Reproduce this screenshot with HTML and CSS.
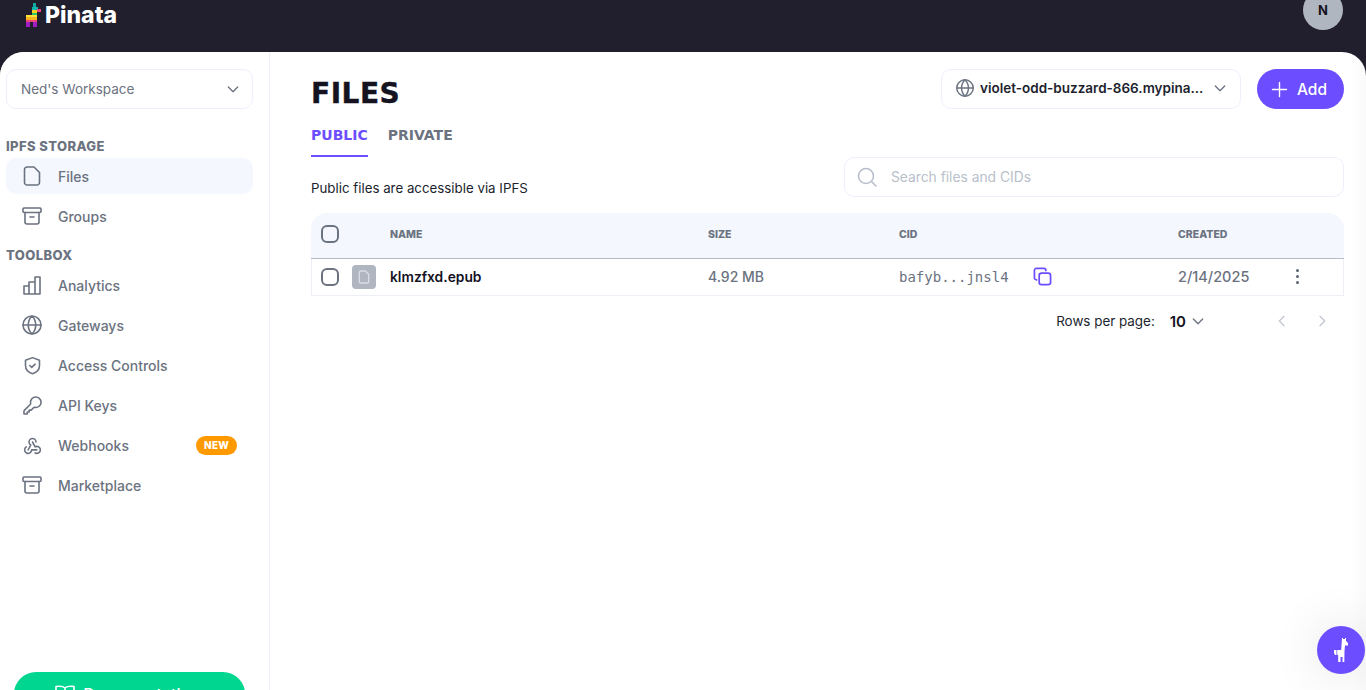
FILE: index.html
```html
<!DOCTYPE html>
<html lang="en">
<head>
    <title>Pinata - Files</title>
    <link rel="stylesheet" href="styles.css">
</head>
<body>

<header class="topbar">
    <a class="logo">
        <svg class="logo-mark" viewBox="0 0 16 24" width="16" height="24">
            <rect x="8" y="0" width="3" height="4" fill="#12a8a0"/>
            <rect x="7" y="4" width="6" height="3" fill="#12b5b0"/>
            <rect x="12" y="6" width="4" height="3" fill="#f0427c"/>
            <rect x="7" y="7" width="5" height="3" fill="#f7d21c"/>
            <rect x="7" y="10" width="5" height="2" fill="#2fc46b"/>
            <rect x="1" y="12" width="11" height="2" fill="#ffe23a"/>
            <rect x="1" y="14" width="11" height="3" fill="#f7b21c"/>
            <rect x="1" y="17" width="11" height="2" fill="#f0427c"/>
            <rect x="1" y="19" width="4" height="5" fill="#a01fc4"/>
            <rect x="8" y="19" width="4" height="5" fill="#a01fc4"/>
        </svg>
        <span>Pinata</span>
    </a>
    <div class="avatar">N</div>
</header>

<div class="app">
    <aside class="sidebar">
        <div class="workspace">
            <span>Ned's Workspace</span>
            <svg class="ico-sm" viewBox="0 0 24 24"><path d="M5 9l7 7 7-7"/></svg>
        </div>

        <h4 class="nav-title">IPFS Storage</h4>
        <a class="nav-item active">
            <svg class="ico" viewBox="0 0 24 24"><path d="M14 3H7a2.500 2.500 0 0 0-2.500 2.500v13A2.500 2.500 0 0 0 7 21h10a2.500 2.500 0 0 0 2.500-2.500V8.500z"/></svg>
            Files
        </a>
        <a class="nav-item">
            <svg class="ico" viewBox="0 0 24 24"><rect x="3" y="4" width="18" height="4.500" rx="1"/><path d="M5 8.500V18a2 2 0 0 0 2 2h10a2 2 0 0 0 2-2V8.500M10 13h4"/></svg>
            Groups
        </a>

        <h4 class="nav-title second">Toolbox</h4>
        <a class="nav-item">
            <svg class="ico" viewBox="0 0 24 24"><path d="M4 13h5v8H4zM9 9h6v12H9zM15 4h5v17h-5z"/></svg>
            Analytics
        </a>
        <a class="nav-item">
            <svg class="ico" viewBox="0 0 24 24"><circle cx="12" cy="12" r="9"/><path d="M3 12h18M12 3c5 5 5 13 0 18M12 3c-5 5-5 13 0 18"/></svg>
            Gateways
        </a>
        <a class="nav-item">
            <svg class="ico tight" viewBox="0 0 24 24"><path d="M12 3l8 3v6c0 5-3.500 8-8 9.500C7.500 20 4 17 4 12V6z"/><path d="M9 12l2.200 2.200L15 10.500"/></svg>
            Access Controls
        </a>
        <a class="nav-item">
            <svg class="ico tight" viewBox="0 0 24 24"><path d="M21.750 8.250a6 6 0 0 1-7.029 5.912c-.563-.097-1.159.026-1.563.43L10.500 17.250H8.250v2.250H6v2.250H2.250v-2.818c0-.597.237-1.170.659-1.591l6.499-6.499c.404-.404.527-1 .43-1.563A6 6 0 1 1 21.750 8.250z"/></svg>
            API Keys
        </a>
        <a class="nav-item">
            <svg class="ico tight" viewBox="0 0 24 24"><path d="M4.876 13.610a4 4 0 1 0 6.124 3.390h6M15.066 20.502a4 4 0 1 0 1.934-7.502c-.706 0-1.424.179-2 .5l-3-5.500M16 8a4 4 0 1 0-8 0c0 1.506.77 2.818 2 3.500l-3 5.500"/></svg>
            Webhooks
            <span class="badge">NEW</span>
        </a>
        <a class="nav-item">
            <svg class="ico" viewBox="0 0 24 24"><rect x="3" y="4" width="18" height="4.500" rx="1"/><path d="M5 8.500V18a2 2 0 0 0 2 2h10a2 2 0 0 0 2-2V8.500M10 13h4"/></svg>
            Marketplace
        </a>

        <a class="docs-btn">
            <svg class="ico" viewBox="0 0 24 24"><path d="M12 6C10 4 7 4 3 4.500V19c4-.5 7-.5 9 1.500 2-2 5-2 9-1.500V4.500C17 4 14 4 12 6zM12 6v14"/></svg>
            Documentation
        </a>
    </aside>

    <main class="content">
        <div class="page-head">
            <h1>Files</h1>
            <div class="head-actions">
                <div class="gateway">
                    <svg class="ico globe" viewBox="0 0 24 24"><circle cx="12" cy="12" r="9"/><path d="M3 12h18M12 3c5 5 5 13 0 18M12 3c-5 5-5 13 0 18"/></svg>
                    <span class="gateway-name">violet-odd-buzzard-866.mypina...</span>
                    <svg class="ico-sm" viewBox="0 0 24 24"><path d="M5 9l7 7 7-7"/></svg>
                </div>
                <button class="add-btn">
                    <svg class="ico" viewBox="0 0 24 24"><path d="M12 4v16M4 12h16"/></svg>
                    Add
                </button>
            </div>
        </div>

        <nav class="tabs">
            <a class="tab active">Public</a>
            <a class="tab">Private</a>
        </nav>

        <div class="filter-row">
            <p class="note">Public files are accessible via IPFS</p>
            <div class="search">
                <svg class="ico" viewBox="0 0 24 24"><circle cx="11" cy="11" r="7.500"/><path d="M16.500 16.500L21 21"/></svg>
                <span>Search files and CIDs</span>
            </div>
        </div>

        <div class="files-table">
            <div class="t-row t-head">
                <div class="t-check"><span class="checkbox"></span></div>
                <div>Name</div>
                <div>Size</div>
                <div>CID</div>
                <div>Created</div>
            </div>
            <div class="t-row t-body">
                <div class="t-check">
                    <span class="checkbox"></span>
                    <span class="file-thumb">
                        <svg viewBox="0 0 24 24" width="16" height="16"><path d="M14 3H7a2 2 0 0 0-2 2v14a2 2 0 0 0 2 2h10a2 2 0 0 0 2-2V8z"/></svg>
                    </span>
                </div>
                <div class="file-name">klmzfxd.epub</div>
                <div class="file-size">4.92 MB</div>
                <div class="cid">
                    <code>bafyb...jnsl4</code>
                    <svg class="copy" viewBox="0 0 20 20" width="19" height="19"><path d="M4.500 13.500H3.500a2 2 0 0 1-2-2V3.500a2 2 0 0 1 2-2h8a2 2 0 0 1 2 2v1"/><rect x="6.500" y="6.500" width="12" height="12" rx="2.500"/></svg>
                </div>
                <div class="created">
                    <span>2/14/2025</span>
                    <span class="dots"><i></i><i></i><i></i></span>
                </div>
            </div>
        </div>

        <div class="pager">
            <span class="rows-label">Rows per page:</span>
            <span class="rows-value">10</span>
            <svg class="ico-sm" viewBox="0 0 24 24"><path d="M5 9l7 7 7-7"/></svg>
            <svg class="ico-sm pager-arrow first" viewBox="0 0 24 24"><path d="M15 5l-7 7 7 7"/></svg>
            <svg class="ico-sm pager-arrow" viewBox="0 0 24 24"><path d="M9 5l7 7-7 7"/></svg>
        </div>
    </main>
</div>

<button class="chat-btn">
    <svg viewBox="0 0 15 24" width="15" height="24"><path d="M8 0h1v1h2V0h1v3l2 2v2.500h-3l-.5 5.500-.2 11H8.500v-5h-2v5H4.200v-6.500l-1-1V12h4zM0 12h2.500v5H1l-1-2z" fill="#fff"/></svg>
</button>

</body>
</html>
```

FILE: styles.css
```css
html, body { height: 100%; }
body { margin: 0; background: #211f2e; font-family: Inter, "Liberation Sans", sans-serif; color: #6b7280; overflow: hidden; }
svg { flex: none; }

.topbar { height: 52px; display: flex; justify-content: space-between; align-items: flex-start; padding: 0 23px 0 25px; box-sizing: border-box; }
.logo { display: flex; align-items: center; gap: 4px; margin-top: 3px; color: #fff; font-size: 23px; font-weight: 800; line-height: 24px; }
.avatar { width: 40px; height: 40px; margin-top: -10px; border-radius: 50%; background: #b0b6c0; color: #14131f; font-size: 13px; font-weight: 700; display: flex; align-items: center; justify-content: center; }

.app { display: flex; height: 638px; background: linear-gradient(to right, #fff calc(100% - 16px), #fafafa); border-radius: 24px 24px 0 0; overflow: hidden; }

.ico { width: 24px; height: 24px; fill: none; stroke: currentColor; stroke-width: 1.600; stroke-linejoin: round; stroke-linecap: round; }
.ico.tight { width: 21px; height: 21px; margin: 0 1.500px; stroke-width: 1.800; }
.ico-sm { width: 16px; height: 16px; fill: none; stroke: currentColor; stroke-width: 2; stroke-linejoin: round; stroke-linecap: round; }

.sidebar { width: 270px; height: 664px; flex: none; box-sizing: border-box; padding: 17px 16px 0 6px; background: #fff; border-right: 1px solid #eeeefa; display: flex; flex-direction: column; }
.workspace { height: 40px; box-sizing: border-box; border: 1px solid #eeeefc; border-radius: 10px; padding: 0 11px 0 14px; display: flex; align-items: center; justify-content: space-between; font-size: 13.500px; margin-bottom: 29px; }
.nav-title { margin: 0 0 4px; font-size: 13px; line-height: 16px; font-weight: 800; text-transform: uppercase; letter-spacing: .4px; }
.nav-title.second { margin-top: 9px; }
.nav-item { height: 36px; flex: none; margin-bottom: 4px; border-radius: 10px; padding: 0 16px 0 14px; display: flex; align-items: center; gap: 14px; font-size: 14px; font-weight: 500; }
.nav-item.active { background: #f4f7fe; }
.badge { margin-left: auto; background: #ff9900; color: #fff; font-size: 10px; font-weight: 800; line-height: 19px; padding: 0 8px; border-radius: 10px; letter-spacing: .2px; }
.docs-btn { margin: auto 8px 0; height: 44px; flex: none; box-sizing: border-box; padding-right: 6px; border-radius: 22px; background: #00d68f; color: #fff; font-size: 16px; font-weight: 500; display: flex; align-items: center; justify-content: center; gap: 6px; }

.content { flex: 1; min-width: 0; padding: 17px 22px 0 41px; }
.page-head { display: flex; justify-content: space-between; align-items: flex-start; height: 52px; }
h1 { margin: 7px 0 0; font-family: "DejaVu Sans", sans-serif; font-size: 28px; line-height: 36px; font-weight: 700; letter-spacing: .5px; -webkit-text-stroke: .4px #14131f; color: #14131f; text-transform: uppercase; }
.head-actions { display: flex; gap: 16px; }
.gateway { width: 300px; height: 40px; box-sizing: border-box; border: 1px solid #eeeefc; border-radius: 10px; padding: 0 12px 2px 12px; display: flex; align-items: center; font-size: 13.500px; font-weight: 600; color: #211f2e; }
.gateway .globe { width: 22px; height: 22px; color: #6b7280; margin-right: 4px; }
.gateway-name { flex: 1; white-space: nowrap; overflow: hidden; }
.gateway .ico-sm { color: #6b7280; }
.add-btn { width: 87px; height: 40px; border: 0; border-radius: 20px; background: #6c4dff; color: #fff; font: 500 15.500px Inter, sans-serif; display: flex; align-items: center; justify-content: center; gap: 7px; padding: 0 5px 0 0; }
.add-btn .ico { width: 21px; height: 21px; }

.tabs { display: flex; gap: 20px; height: 35px; margin-top: 4px; }
.tab { height: 28px; padding-top: 2px; font-family: "DejaVu Sans", sans-serif; font-size: 14px; line-height: 16px; font-weight: 700; text-transform: uppercase; }
.tab.active { color: #6c4dff; border-bottom: 2px solid #6c4dff; }

.filter-row { display: flex; justify-content: space-between; align-items: flex-start; height: 56px; margin-top: -3px; }
.note { margin: 21px 0 0; font-size: 13.300px; line-height: 20px; color: #211f2e; }
.search { width: 500px; height: 40px; box-sizing: border-box; border: 1px solid #eeeefc; border-radius: 10px; padding: 0 10px; display: flex; align-items: center; gap: 12px; font-size: 13.800px; color: #b8bfca; }

.t-row { display: grid; grid-template-columns: 79px 318px 191px 279px 1fr; align-items: center; }
.t-head { height: 46px; box-sizing: border-box; padding-bottom: 3px; background: #f4f7fe; border-radius: 16px 16px 0 0; border-bottom: 1px solid #b4bccb; font-size: 10.500px; font-weight: 800; text-transform: uppercase; }
.t-body { height: 37px; box-sizing: border-box; padding-bottom: 1px; grid-template-columns: 78px 318px 191px 279px 1fr; border: solid #eeeff6; border-width: 0 1px 1px; font-size: 14px; font-weight: 500; }
.t-check { display: flex; align-items: center; gap: 13px; padding-left: 10px; }
.t-body .t-check { padding-left: 9px; }
.checkbox { width: 18px; height: 18px; box-sizing: border-box; border: 2px solid #6b7280; border-radius: 6px; flex: none; }
.file-thumb { width: 24px; height: 24px; flex: none; margin-right: -20px; border-radius: 4px; background: #b0b6c0; display: flex; align-items: center; justify-content: center; }
.file-thumb path { fill: none; stroke: #d9dde3; stroke-width: 2; }
.file-name { font-size: 13.800px; font-weight: 600; color: #14131f; }
.cid { display: flex; align-items: center; }
code { font: 14px/20px "DejaVu Sans Mono", monospace; width: 134px; }
.copy { fill: none; stroke: #6c4dff; stroke-width: 1.800; }
.created { display: flex; align-items: center; justify-content: space-between; padding-right: 44px; font-size: 14.500px; }
.dots { display: flex; flex-direction: column; gap: 3px; }
.dots i { width: 3px; height: 3px; border-radius: 50%; background: #5c6370; }

.pager { display: flex; align-items: center; justify-content: flex-end; height: 50px; font-size: 13.400px; padding-right: 14px; color: #211f2e; }
.rows-value { margin-left: 15px; margin-right: 4px; font-size: 15px; font-weight: 600; color: #14131f; }
.pager > .ico-sm { color: #6b7280; }
.pager > .pager-arrow { color: #c2c7d0; margin-left: 24px; }
.pager > .pager-arrow.first { margin-left: 68px; }

.chat-btn { position: fixed; right: 1px; bottom: 16px; width: 48px; height: 48px; padding: 0; border: 0; border-radius: 50%; background: #6c4dff; box-shadow: 0 0 50px rgba(0, 0, 0, .12); display: flex; align-items: center; justify-content: center; }
```
